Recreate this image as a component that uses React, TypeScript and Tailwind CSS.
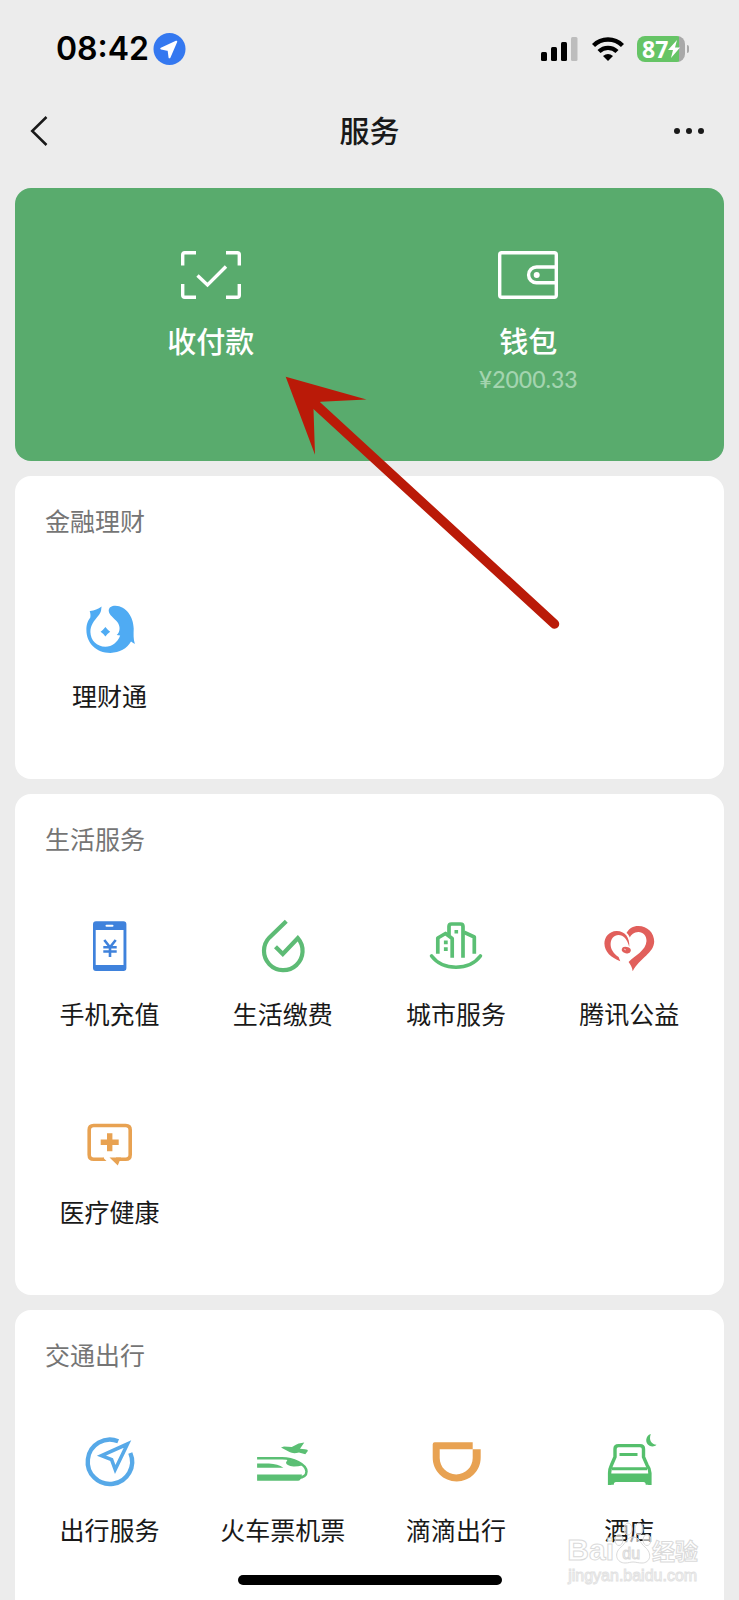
import type { ReactNode } from "react";

type Service = { label: string; icon: ReactNode };

function Icon({ children }: { children: ReactNode }) {
  return (
    <svg viewBox="0 0 56 56" className="h-14 w-14 overflow-visible" fill="none" aria-hidden="true">
      {children}
    </svg>
  );
}

const wealthIcon = (
  <Icon>
    <path
      fill="#4fabf3"
      d="M7.700 10C12 10.200 16 8 19.600 5.600C19 9 19.500 11 16.500 14.500C12 20 8.400 24 8.400 31C8.600 39.500 15 45.700 23.400 45.700C30 45.700 35.500 41.500 38.200 34.500L34.700 34C38.500 31 38.300 25 35.500 21.300C32.500 17.300 26.700 14 26.700 9.500C26.900 6.300 29.500 4.700 33.400 4.700C44 5 51.500 15.500 51.700 27.500C51.600 33 51.200 38 52.900 43C51.300 42.300 50.300 41.500 49 40.600C45 47.800 37.500 51.900 28.400 51.900C14 51.900 4.400 42 4.400 29C4.400 23.500 5.500 20.500 8.300 16.500C8.800 14 8.300 12 7.700 10Z"
    />
    <path fill="#4fabf3" d="M23.400 26Q25.500 28.800 28.200 30.700Q25.500 32.600 23.400 35.400Q21.300 32.600 18.600 30.700Q21.300 28.800 23.400 26Z" />
  </Icon>
);

const phoneIcon = (
  <Icon>
    <path
      fill="#3f82dc"
      fillRule="evenodd"
      d="M14 2.300H41.400A3 3 0 0 1 44.400 5.300V49A3 3 0 0 1 41.400 52H14A3 3 0 0 1 11 49V5.300A3 3 0 0 1 14 2.300ZM13.700 11V46H41.500V11ZM24.500 5.700A1 1 0 0 0 24.500 7.700H30.500A1 1 0 0 0 30.500 5.700Z"
    />
    <path stroke="#3f82dc" strokeWidth="2.600" d="M22.300 21L28 28.200L33.700 21M21.300 28.300H34.700M21.300 32.500H34.700M28 28V38" />
  </Icon>
);

const utilityIcon = (
  <Icon>
    <path
      stroke="#5dbb75"
      strokeWidth="4.200"
      d="M31.300 2.200L14.500 18.400A19.300 19.300 0 1 0 42.800 19.200L27.800 35L20.500 27.700"
    />
  </Icon>
);

const cityIcon = (
  <Icon>
    <g stroke="#5bbf74" strokeWidth="3.700" strokeLinejoin="round">
      <path strokeLinecap="round" d="M3.600 37C15 52 41 52 52.400 37" />
      <path d="M21 16V7.500Q21 5 23.500 5H32.500Q35 5 35 7.500V38.800" />
      <path d="M9.800 34.800V19L17.500 14.500L24.200 19.500V38.800" />
      <path d="M36 13.300L46.300 18V34.800" />
    </g>
    <path fill="#5bbf74" d="M15.900 21.500h3.800v3.800h-3.800zM15.900 28.200h3.800v3.800h-3.800zM26.500 10.900h3.600v3.600h-3.600z" />
  </Icon>
);

const heartIcon = (
  <Icon>
    <path
      fill="#e15f5b"
      d="M28.300 28C29 18 23.500 11.700 15.500 11.900C8 12.200 3.400 18 3.400 24.500C3.600 33 10 38.500 19.300 42.200L17.600 38C12.500 34.500 9.500 30 9.600 25C9.800 19.500 13 16 17.500 16C22.500 16 26.200 20 28.300 28Z"
    />
    <path
      fill="#e15f5b"
      d="M25.500 14C28 9.500 32 7 37.300 7C46.500 7 53.200 14 53.200 22.500C53 34 39 39 31.700 52.200C31 48 29.500 45.500 27.600 43C34 36.500 45 31.500 45.500 22C45.600 16.500 42 12.900 37.300 13C33 13.200 30 15.500 28.700 18.500C28.200 16.500 27 15 25.500 14Z"
    />
    <ellipse cx="25.300" cy="31" rx="4.600" ry="3.200" transform="rotate(12 25 31)" fill="#e15f5b" />
    <path stroke="#fff" strokeWidth=".6" d="M23 30L25 31" />
  </Icon>
);

const healthIcon = (
  <Icon>
    <path
      stroke="#e8a252"
      strokeWidth="3.600"
      d="M22 42.200H11.700Q7.200 42.200 7.200 37.700V13Q7.200 8.500 11.700 8.500H43.700Q48.200 8.500 48.200 13V37.700Q48.200 42.200 43.700 42.200H34"
    />
    <path fill="#e8a252" d="M27.500 40.400H39L35.800 48.500ZM21 40.400L24.500 44H20Z" />
    <path stroke="#e8a252" strokeWidth="5.400" d="M27.700 16.300V34.300M18.700 25.300H36.700" />
  </Icon>
);

const tripIcon = (
  <Icon>
    <path stroke="#57a9e8" strokeWidth="4.400" d="M36.200 6.200A22.200 22.200 0 1 0 48.300 18" />
    <path stroke="#57a9e8" strokeWidth="3.600" d="M45.500 9L19.500 20.700L29.600 24.700L33.200 34.500Z" />
  </Icon>
);

const trainIcon = (
  <Icon>
    <path
      fill="#5bbf74"
      d="M26 12.400L29 11.500L36.800 12L43.600 8.400L49.300 7.500L45 13.800L50 14.300Q53 14.500 52.800 16L50.300 19.300L44 17.500Q38 19 34.500 17Z"
    />
    <path fill="#5bbf74" d="M2.100 39.400H47Q46 45.800 43 45.800H2.100ZM2.100 28.500H14Q23 28.800 28.400 32.800H2.100Z" />
    <path stroke="#5bbf74" strokeWidth="2.500" d="M2.100 23.200H27C38 23.200 51.400 29 51.500 36.500C51.500 40 48.500 42.500 43 43" />
    <path fill="#5bbf74" d="M32.500 24.700C38 24.700 44 27 47 30.500Q43 31.600 38.500 31.500Q31 30.500 31 27.500Z" />
  </Icon>
);

const didiIcon = (
  <Icon>
    <path
      fill="#e8a252"
      fillRule="evenodd"
      d="M6.700 7.300H44.700V14.300H52.700V22.500C52.700 36 42 46.400 28.700 46.400S4.700 36 4.700 22.500V9.300Q4.700 7.300 6.700 7.300ZM11.700 14.300V23C11.700 32 19 39.400 28.200 39.400S44.700 32 44.700 23V14.300Z"
    />
  </Icon>
);

const hotelIcon = (
  <Icon>
    <path stroke="#55bf6c" strokeWidth="3.400" d="M8.600 50V38Q8.600 34 10.500 30L14 22V14Q14 10.600 17.500 10.600H39Q42.500 10.600 42.500 14V22L46 30Q48.900 34 48.900 38V50" />
    <path stroke="#55bf6c" strokeWidth="3" d="M18.500 19.400H36.500M11 33.700H46" />
    <path fill="#55bf6c" d="M8 38.500H49.500V49.800H44.700Q44.700 47 42.500 47H15Q12.800 47 12.800 49.800H8Z" />
    <path fill="#55bf6c" d="M49.800 -1C44.500 0.500 43.500 8 48.500 10.800C51 12 54 11.600 55.500 9.800C50.500 9.500 47.500 5 49.800 -1Z" />
  </Icon>
);

const sections: { title: string; items: Service[] }[] = [
  { title: "金融理财", items: [{ label: "理财通", icon: wealthIcon }] },
  {
    title: "生活服务",
    items: [
      { label: "手机充值", icon: phoneIcon },
      { label: "生活缴费", icon: utilityIcon },
      { label: "城市服务", icon: cityIcon },
      { label: "腾讯公益", icon: heartIcon },
      { label: "医疗健康", icon: healthIcon },
    ],
  },
  {
    title: "交通出行",
    items: [
      { label: "出行服务", icon: tripIcon },
      { label: "火车票机票", icon: trainIcon },
      { label: "滴滴出行", icon: didiIcon },
      { label: "酒店", icon: hotelIcon },
    ],
  },
];

function StatusBar() {
  return (
    <div className="flex h-[98px] items-center justify-between pr-[50px] pl-14">
      <div className="flex items-center gap-1">
        <span className="font-['Inter'] text-[32px] leading-10 font-semibold text-black">08:42</span>
        <svg viewBox="0 0 34 34" className="h-[34px] w-[33px]" aria-hidden="true">
          <circle cx="17" cy="17" r="16.500" fill="#3478f0" />
          <path d="M24 9.500L8.500 16.500L16 18L17 25.500Z" fill="#fff" stroke="#fff" strokeWidth="2" strokeLinejoin="round" />
        </svg>
      </div>
      <div className="flex items-center">
        <svg viewBox="0 0 37 24" className="h-6 w-[37px]" aria-hidden="true">
          <rect x="0" y="15" width="6" height="9" rx="1.500" />
          <rect x="10" y="10" width="6" height="14" rx="1.500" />
          <rect x="20" y="5" width="6" height="19" rx="1.500" />
          <rect x="30" y="0" width="6.500" height="24" rx="1.500" fill="#bdbdbd" />
        </svg>
        <svg viewBox="0 0 32 24" className="ml-[14px] h-6 w-8" fill="none" stroke="#000" strokeWidth="4.300" aria-hidden="true">
          <path d="M1.500 8.500A20.500 20.500 0 0 1 30.500 8.500" />
          <path d="M7 14.500A12.800 12.800 0 0 1 25 14.500" />
          <path d="M16 24L11 19Q16 14.800 21 19Z" fill="#000" stroke="none" />
        </svg>
        <div className="ml-[13px] flex items-center gap-[2px]">
          <div className="flex h-[26px] w-12 items-center rounded-lg bg-linear-to-r from-[#66c466] from-[87%] to-[#a8a8a8] to-[87%] pl-[5px]">
            <span className="font-['Open_Sans'] text-[23px] leading-[26px] font-bold text-white">87</span>
            <svg viewBox="0 0 12 18" className="h-[18px] w-3" fill="#fff" aria-hidden="true">
              <path d="M9 0L0 10H5L3 18L12 7.500H7Z" />
            </svg>
          </div>
          <div className="h-2 w-[2px] rounded-r-full bg-[#a8a8a8]" />
        </div>
      </div>
    </div>
  );
}

function NavBar() {
  return (
    <header className="grid h-[66px] grid-cols-3 items-center px-[29px]">
      <button type="button" aria-label="返回" className="justify-self-start">
        <svg viewBox="0 0 20 32" className="h-8 w-5" fill="none" stroke="#191919" strokeWidth="2.500" aria-hidden="true">
          <path d="M17.500 2L3.200 16L17.500 30" />
        </svg>
      </button>
      <h1 className="pb-1 text-center text-[30px] leading-10 font-medium text-[#191919]">服务</h1>
      <button type="button" aria-label="更多" className="flex gap-[6px] justify-self-end pr-[6px]">
        <span className="h-[6px] w-[6px] rounded-full bg-[#191919]" />
        <span className="h-[6px] w-[6px] rounded-full bg-[#191919]" />
        <span className="h-[6px] w-[6px] rounded-full bg-[#191919]" />
      </button>
    </header>
  );
}

function PayCard() {
  return (
    <section className="grid grid-cols-2 rounded-2xl bg-[#59ab6d] px-[37px] pt-[63px] pb-[68px] text-white">
      <button type="button" className="flex flex-col items-center">
        <svg viewBox="0 0 60 48" className="h-12 w-[60px]" fill="none" stroke="#fff" strokeWidth="3.400" aria-hidden="true">
          <path d="M15 1.700H3.700Q1.700 1.700 1.700 3.700V14.500M45 1.700H56.300Q58.300 1.700 58.300 3.700V14.500M15 46.300H3.700Q1.700 46.300 1.700 44.300V33M45 46.300H56.300Q58.300 46.300 58.300 44.300V33" />
          <path d="M16.500 24.500L26.500 34L45 15.500" />
        </svg>
        <span className="mt-[21px] text-[29px] leading-10 font-medium">收付款</span>
      </button>
      <button type="button" className="flex flex-col items-center">
        <svg viewBox="0 0 60 48" className="h-12 w-[60px]" fill="none" stroke="#fff" strokeWidth="3.400" aria-hidden="true">
          <rect x="1.700" y="1.700" width="56.600" height="44.600" rx="2" />
          <path d="M58 16H38.500A7.900 7.900 0 0 0 38.500 31.800H58" />
          <circle cx="38.700" cy="24" r="3" fill="#fff" stroke="none" />
        </svg>
        <span className="mt-[21px] text-[29px] leading-10 font-medium">钱包</span>
        <span className="mt-[5px] font-['Lato'] text-[23px] leading-7 font-medium text-[#a3d4af]">¥2000.33</span>
      </button>
    </section>
  );
}

function ServiceSection({ title, items }: { title: string; items: Service[] }) {
  return (
    <section className="rounded-2xl bg-white px-2 pt-[26px] pb-5 last:flex-1 last:rounded-b-none last:pb-0">
      <h2 className="pl-[22px] text-[25px] leading-9 text-[#757575]">{title}</h2>
      <div className="mt-[23px] grid grid-cols-4">
        {items.map((item) => (
          <button key={item.label} type="button" className="flex flex-col items-center pt-10 pb-[50px]">
            {item.icon}
            <span className="mt-6 text-[25px] leading-7 whitespace-nowrap text-[#191919]">{item.label}</span>
          </button>
        ))}
      </div>
    </section>
  );
}

function Arrow() {
  return (
    <svg viewBox="0 0 276 256" className="pointer-events-none absolute top-[376px] left-[285px] h-64 w-[276px]" aria-hidden="true">
      <path d="M30 28L269.500 248" stroke="#ba1a08" strokeWidth="9.500" strokeLinecap="round" />
      <path d="M.7 .7L81.500 23.500L35.500 25.800L28.500 33L30 78.700Z" fill="#ba1a08" />
    </svg>
  );
}

function Watermark() {
  return (
    <div className="pointer-events-none absolute right-[41px] bottom-[14px] flex flex-col items-center">
      <div className="relative flex items-center text-white [-webkit-text-stroke:1px_#dadada]">
        <span className="font-['Liberation_Sans'] text-[30px] leading-8 font-bold">Bai</span>
        <svg viewBox="0 0 38 44" className="-mt-4 h-11 w-[38px]" fill="#ffffff" fillOpacity=".6" stroke="#dadada" aria-hidden="true">
          <ellipse cx="5" cy="20" rx="4" ry="5.500" />
          <ellipse cx="14" cy="9" rx="4" ry="6" />
          <ellipse cx="25" cy="9" rx="4" ry="6" />
          <ellipse cx="33" cy="20" rx="4" ry="5.500" />
          <path d="M19 17C13 17 12 23 7 27C-1 34 3 43 11 43C15 43 16 42 19 42S24 43 28 43C36 43 39 34 31 27C26 23 25 17 19 17Z" />
        </svg>
        <span className="absolute bottom-1 left-[55px] font-['Liberation_Sans'] text-[16px] leading-4">du</span>
        <span className="text-[23px] leading-8 font-bold">经验</span>
      </div>
      <span className="font-['Liberation_Sans'] text-[16px] leading-5 text-white [-webkit-text-stroke:1px_#e2e2e2]">jingyan.baidu.com</span>
    </div>
  );
}

export default function App() {
  return (
    <div className="relative flex min-h-screen flex-col overflow-hidden bg-[#ececec] font-['Noto_Sans_CJK_SC',sans-serif]">
      <StatusBar />
      <NavBar />
      <main className="mt-6 flex flex-1 flex-col gap-[15px] px-[15px]">
        <PayCard />
        {sections.map((section) => (
          <ServiceSection key={section.title} title={section.title} items={section.items} />
        ))}
      </main>
      <Arrow />
      <Watermark />
      <div className="absolute bottom-[15px] left-1/2 h-[10px] w-[264px] -translate-x-1/2 rounded-full bg-black" />
    </div>
  );
}
